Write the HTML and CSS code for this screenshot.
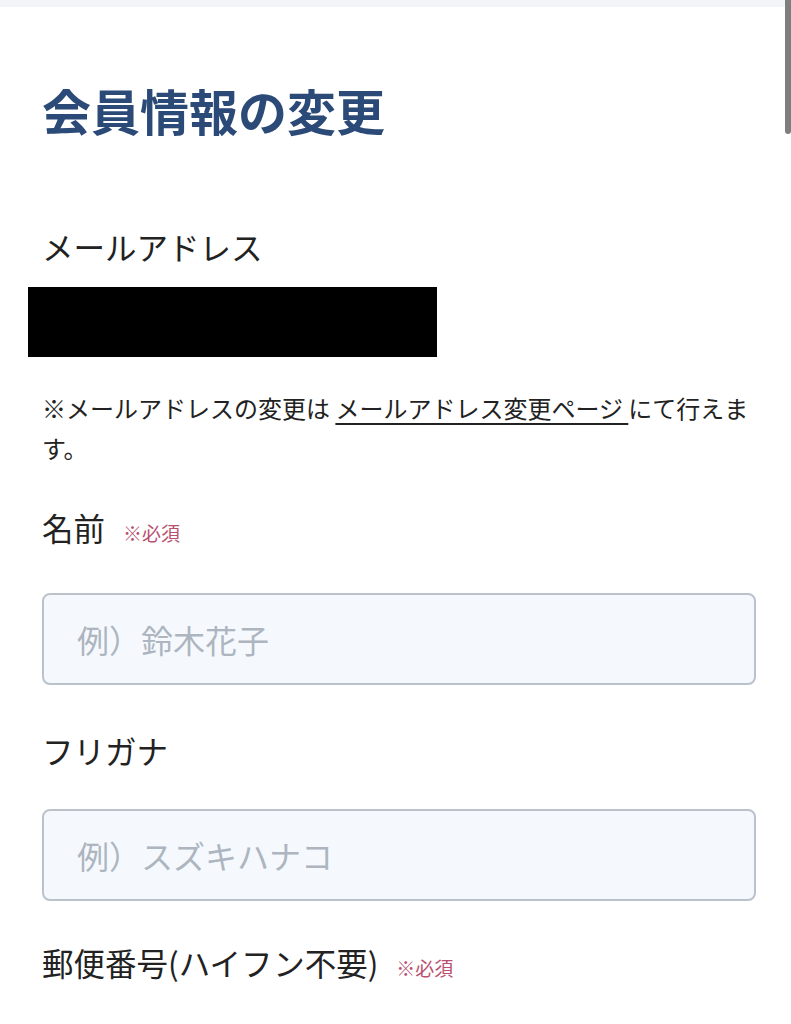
FILE: index.html
```html
<!DOCTYPE html>
<html lang="ja">
<head>
<meta charset="utf-8">
<title>会員情報の変更</title>
<link rel="stylesheet" href="styles.css">
</head>
<body>
<div class="topband"></div>
<div class="scrollbar"></div>
<main class="page">
  <h1 class="title">会員情報の変更</h1>

  <div class="label label-email">メールアドレス</div>
  <div class="redacted"></div>
  <p class="note">※メールアドレスの変更は <a class="note-link" href="#">メールアドレス変更ページ </a>にて行えます。</p>

  <div class="label label-name">名前<span class="req">※必須</span></div>
  <input class="field" type="text" placeholder="例）鈴木花子">

  <div class="label label-kana">フリガナ</div>
  <input class="field" type="text" placeholder="例）スズキハナコ">

  <div class="label label-zip">郵便番号(ハイフン不要)<span class="req">※必須</span></div>
  <input class="field" type="text">
</main>
</body>
</html>
```

FILE: styles.css
```css
html, body {
  margin: 0;
  padding: 0;
  background: #ffffff;
}

body {
  font-family: "Noto Sans CJK JP", "Noto Sans", sans-serif;
  color: #222222;
  overflow: hidden;
  height: 1024px;
  position: relative;
}

.topband {
  height: 7px;
  background: #f3f4f7;
}

.scrollbar {
  position: absolute;
  top: 0;
  right: 0;
  width: 6px;
  height: 134px;
  background: #7e7e7e;
  border-radius: 0 0 3px 3px;
}

.page {
  padding: 0 35px 0 42px;
}

.title {
  margin: 73px 0 0;
  font-size: 49px;
  line-height: 60px;
  font-weight: 700;
  color: #2b4a78;
}

.label {
  display: flex;
  align-items: baseline;
  font-size: 31.5px;
  line-height: 40px;
  font-weight: 400;
  color: #222222;
}

.label-email { margin-top: 86px; }
.label-name { margin-top: 39px; }
.label-kana { margin-top: 45px; }
.label-zip { margin-top: 41px; }

.req {
  margin-left: 18px;
  font-size: 19px;
  color: #b9506f;
}

.redacted {
  margin: 21px 0 0 -14px;
  width: 409px;
  height: 70px;
  background: #000000;
}

.note {
  margin: 31px 0 0;
  font-size: 24px;
  line-height: 40px;
  color: #222222;
}

.note-link {
  color: #222222;
  text-decoration: underline;
  text-decoration-thickness: 2px;
  text-underline-offset: 5px;
}

.field {
  display: block;
  box-sizing: border-box;
  width: 100%;
  height: 92px;
  margin: 40px 0 0;
  padding: 0 0 0 33px;
  border: 2px solid #bac2cc;
  border-radius: 8px;
  background: #f5f9fd;
  font-family: "Noto Sans CJK JP", "Noto Sans", sans-serif;
  font-size: 32px;
  color: #222222;
  outline: none;
}

.label-kana + .field,
.label-zip + .field {
  margin-top: 39px;
}

.field::placeholder {
  color: #adb5c0;
}
```
